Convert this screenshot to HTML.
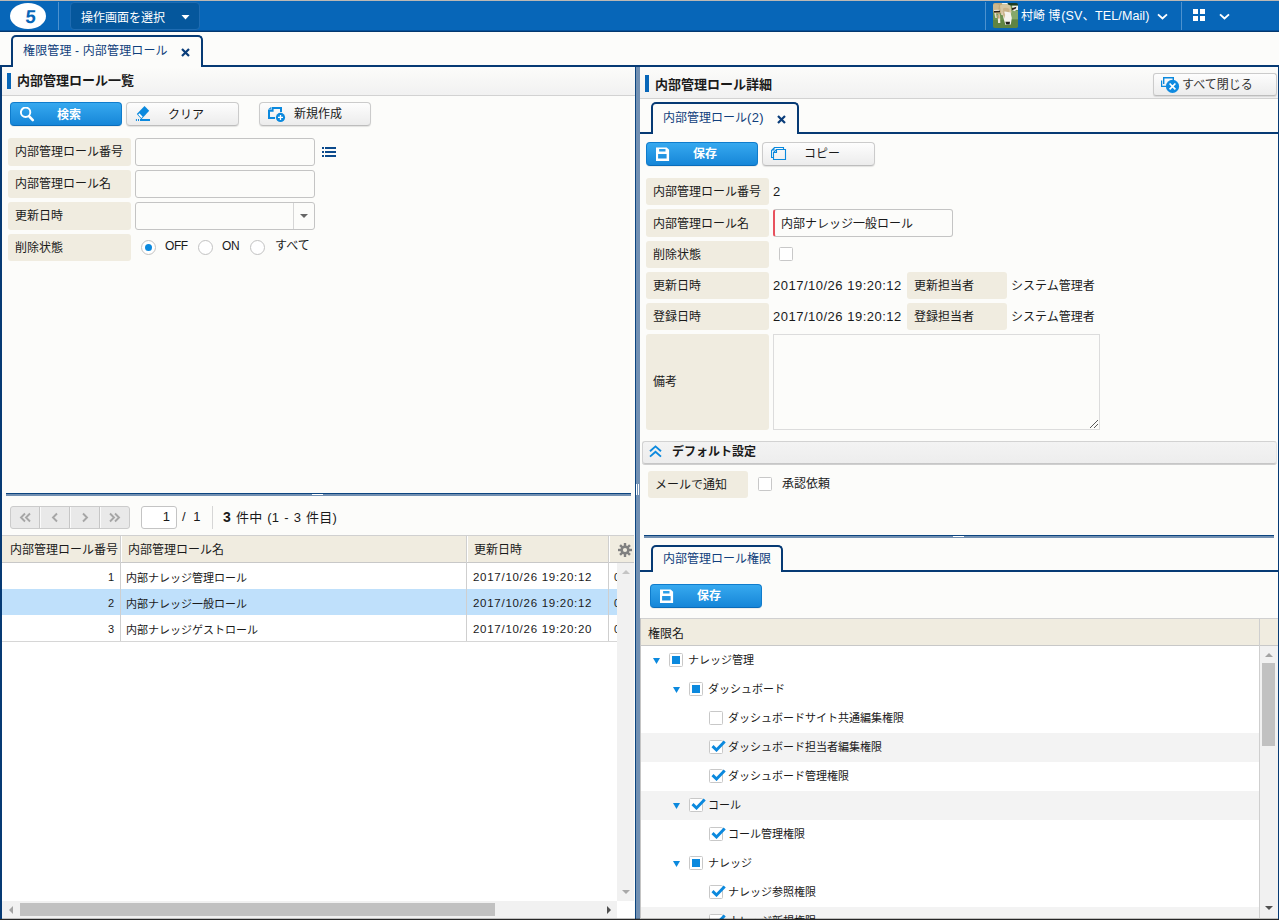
<!DOCTYPE html>
<html lang="ja">
<head>
<meta charset="utf-8">
<title>権限管理 - 内部管理ロール</title>
<style>
*{box-sizing:border-box;margin:0;padding:0}
html,body{width:1279px;height:920px;overflow:hidden;background:#fcfcfa}
body{position:relative;font-family:"Liberation Sans","Noto Sans CJK JP",sans-serif;font-size:12px;color:#1a1a1a;line-height:1}
.a{position:absolute}
.t{position:absolute;white-space:nowrap;line-height:16px;height:16px}
.nv{background:#063a74}
/* header */
#hd{left:0;top:0;width:1279px;height:32px;background:#0766b8;border-top:1px solid #bcb8b4;border-bottom:1px solid #03386f;box-shadow:inset 0 -1px 0 #05509a}
.hsep{top:1px;width:1px;height:28px;background:#4d92cf}
/* tabs */
.tab{border:2px solid #063a74;border-bottom:0;border-radius:5px 5px 0 0;background:#fcfcfa}
.tabt{color:#103f7c}
/* section title */
.sec{background:linear-gradient(#fcfcfa,#f1f1f1);border-bottom:1px solid #d2d2d2}
.mk{width:4px;background:#0766b8}
.st{font-weight:bold;font-size:13px;color:#1a1a1a}
/* buttons */
.bb{height:24px;border-radius:4px;border:1px solid #0f7ccc;border-bottom-color:#0a6cba;background:linear-gradient(#37a9ef,#1686d8);box-shadow:0 1px 0 rgba(0,0,0,.06)}
.bb .t{color:#fff;font-weight:bold}
.gb{height:24px;border-radius:4px;border:1px solid #cbcbcb;border-bottom-color:#bdbdbd;background:linear-gradient(#fdfdfd,#ececec);box-shadow:0 1px 1px rgba(0,0,0,.10)}
/* form */
.lb{background:#f0ece0;border-radius:3px}
.in{border:1px solid #c4c4c4;border-radius:3px;background:#fcfcfa}
.cb{width:14px;height:14px;border:1px solid #c8c8c8;border-radius:1.500px;background:#fff}
.rd{width:15px;height:15px;border:1px solid #c2c2c2;border-radius:50%;background:#fff}
/* grid */
.gh{background:#f0ece0;border-top:1px solid #d0d0d0;border-bottom:1px solid #c8c8c8}
.vd{width:1px;background:#cfcfcf}
.sb{background:#f1f1f1}
.th{background:#c1c1c1}
.g11{font-size:11px}
.dt{font-size:13px;letter-spacing:.5px}
.dt11{font-size:11.5px;letter-spacing:.72px}
</style>
</head>
<body>

<!-- ===== HEADER ===== -->
<div id="hd" class="a">
  <div class="a" style="left:10px;top:2px;width:36px;height:26px;border-radius:50%;background:#fff"></div>
  <div class="t" style="left:12.5px;top:6px;width:36px;text-align:center;font-size:18.500px;line-height:20px;height:20px;font-weight:bold;transform:translate(-.3px,-.5px) skewX(-5deg);color:#0766b8">5</div>
  <div class="a hsep" style="left:58px"></div>
  <div class="a" style="left:70px;top:1px;width:130px;height:28px;border-radius:4px;background:#05579c;border:1px solid #1f6cb2"></div>
  <div class="t" style="left:81px;top:9px;color:#fff">操作画面を選択</div>
  <svg class="a" style="left:181px;top:14px" width="9" height="5" viewBox="0 0 9 5"><path d="M0.5 0h8L4.5 4.6z" fill="#fff"/></svg>

  <div class="a hsep" style="left:985px"></div>
  <svg class="a" style="left:993px;top:2px" width="25" height="25" viewBox="0 0 25 25">
    <defs><clipPath id="av"><rect width="25" height="25" rx="1.800"/></clipPath><filter id="bl" x="-10%" y="-10%" width="120%" height="120%"><feGaussianBlur stdDeviation="0.550"/></filter></defs>
    <g clip-path="url(#av)"><g filter="url(#bl)">
      <rect x="-2" y="-2" width="29" height="29" fill="#6d9150"/>
      <rect x="-2" y="17" width="29" height="10" fill="#5e8443"/>
      <path d="M17 8h9v8h-9z" fill="#86a86a"/>
      <rect x="8" y="-2" width="8" height="3.500" fill="#f4f3ee"/>
      <path d="M14 -1h12v3.600H15.500z" fill="#1f3a26"/>
      <path d="M19 2.800h7v4.200h-6z" fill="#eef0ea"/>
      <path d="M-1 -1H9L9.500 9L6 11L2 10.500L-1 8z" fill="#c2a878"/>
      <path d="M0 1.500Q3 0.500 6 2L5 8H0z" fill="#cdb78c"/>
      <path d="M7 2.500Q12 -0.500 17.500 2.500L18.500 9L17.500 12H8z" fill="#d6c6a2"/>
      <path d="M10 5.500Q13 4 16.500 6L16 10.500H10.500z" fill="#c9b288"/>
      <path d="M9 9.500L12 8.500L17.500 9.500L18.800 15L17.800 21.500L12.500 22L11 17z" fill="#f5f3ee"/>
      <path d="M10.500 6.500L12.200 12L11.200 15.500L9.300 10z" fill="#cbb58d"/>
      <path d="M12.400 18.800h4.600l-0.400 2.600h-3.400z" fill="#22211f"/>
      <path d="M18.800 5.200L23.500 3.800L22.500 6L19.300 7.200z" fill="#2a1d15"/>
      <path d="M19 7.300L23.600 6L22 8.300z" fill="#f2efe8"/>
      <path d="M0.800 7.800L7 7.500V9.300L1 9.600z" fill="#2b221b"/>
      <path d="M1 7L6.500 6.800V7.700L1 8z" fill="#eeebe3"/>
      <path d="M4.800 11.500h2.200l0.300 8.500h-2.300z" fill="#efe9dc"/>
      <path d="M1.300 10h1.800l0.800 5h-1.600z" fill="#e6dcc6"/>
      <path d="M4.600 12h2l0.200 3.500h-2z" fill="#c9a77a"/>
    </g></g>
  </svg>
  <div class="t" style="left:1021px;top:7px;color:#fff;font-size:12px">村崎 博<span id="nm" style="font-size:12.5px;letter-spacing:.1px;margin-left:1px">(SV、TEL/Mail)</span></div>
  <svg class="a" style="left:1157px;top:11px" width="11" height="8" viewBox="0 0 11 8"><path d="M1 2.400L5.500 6.400L10 2.400" fill="none" stroke="#fff" stroke-width="1.900"/></svg>
  <div class="a hsep" style="left:1181px"></div>
  <svg class="a" style="left:1193px;top:8px" width="12" height="12" viewBox="0 0 12 12"><path d="M0 0h5v5H0zM7 0h5v5H7zM0 7h5v5H0zM7 7h5v5H7z" fill="#fff"/></svg>
  <svg class="a" style="left:1219px;top:11px" width="11" height="8" viewBox="0 0 11 8"><path d="M1 2.400L5.500 6.400L10 2.400" fill="none" stroke="#fff" stroke-width="1.900"/></svg>
</div>

<!-- ===== MAIN TAB STRIP ===== -->
<div class="a nv" style="left:0;top:65px;width:1279px;height:2px"></div>
<div class="a tab" style="left:11px;top:35px;width:192px;height:32px"></div>
<div class="t tabt" style="left:23px;top:43px;letter-spacing:.15px">権限管理 - 内部管理ロール</div>
<svg class="a" style="left:181px;top:48px" width="9" height="9" viewBox="0 0 9 9"><path d="M1 1L8 8M8 1L1 8" stroke="#0a3d7a" stroke-width="2.2"/></svg>

<!-- ===== LEFT PANEL ===== -->
<div class="a nv" style="left:0;top:65px;width:2px;height:855px"></div>
<div class="a sec" style="left:2px;top:67px;width:633px;height:29px"></div>
<div class="a mk" style="left:7px;top:73px;height:16px"></div>
<div class="t st" style="left:17px;top:73px">内部管理ロール一覧</div>

<!-- buttons -->
<div class="a bb" style="left:10px;top:102px;width:112px">
  <svg class="a" style="left:9px;top:4px" width="16" height="16" viewBox="0 0 16 16"><circle cx="5.600" cy="5.300" r="4.700" fill="none" stroke="#fff" stroke-width="1.900"/><path d="M9.200 9.300L12.800 13.100" stroke="#fff" stroke-width="2.600" stroke-linecap="round"/></svg>
  <div class="t" style="left:46px;top:4px">検索</div>
</div>
<div class="a gb" style="left:126px;top:102px;width:113px">
  <svg class="a" style="left:8px;top:3px" width="16" height="16" viewBox="0 0 16 16"><path d="M9.500 0L14.200 4.750L6.400 13.200L1.800 8.100z" fill="#0b89de"/><path d="M4.400 7.300L7.700 10.700L6.300 12L3.200 8.600z" fill="#fff"/><path d="M5 13h10v2H5z" fill="#0b89de"/><path d="M0.900 13h1v2h-1zM3 13h1v2h-1z" fill="#0b89de"/></svg>
  <div class="t" style="left:41px;top:4px">クリア</div>
</div>
<div class="a gb" style="left:259px;top:102px;width:112px">
  <svg class="a" style="left:8px;top:4px" width="18" height="16" viewBox="0 0 18 16"><path d="M13 5V1H4.600V3.700H1V11H7" fill="none" stroke="#0b89de" stroke-width="2"/><path d="M0 2.600L2.900 0V2.600z" fill="#0b89de"/><circle cx="12.500" cy="10.400" r="4.600" fill="#0b89de"/><path d="M10 10.400h5M12.500 7.900v5" stroke="#fff" stroke-width="1.300"/></svg>
  <div class="t" style="left:34px;top:3px">新規作成</div>
</div>

<!-- search form -->
<div class="a lb" style="left:8px;top:138px;width:123px;height:28px"></div>
<div class="t" style="left:15px;top:144px">内部管理ロール番号</div>
<div class="a in" style="left:135px;top:138px;width:180px;height:28px"></div>
<svg class="a" style="left:322px;top:147px" width="14" height="10" viewBox="0 0 14 10"><path d="M0 0h2v2H0zM3 0h11v2H3zM0 4h2v2H0zM3 4h11v2H3zM0 8h2v2H0zM3 8h11v2H3z" fill="#0b4a8c"/></svg>

<div class="a lb" style="left:8px;top:170px;width:123px;height:28px"></div>
<div class="t" style="left:15px;top:176px">内部管理ロール名</div>
<div class="a in" style="left:135px;top:170px;width:180px;height:28px"></div>

<div class="a lb" style="left:8px;top:202px;width:123px;height:28px"></div>
<div class="t" style="left:15px;top:208px">更新日時</div>
<div class="a in" style="left:135px;top:202px;width:180px;height:28px"></div>
<div class="a" style="left:293px;top:203px;width:1px;height:26px;background:#d6d6d6"></div>
<svg class="a" style="left:300px;top:214px" width="8" height="4" viewBox="0 0 8 4"><path d="M0 0h8L4 4z" fill="#666"/></svg>

<div class="a lb" style="left:8px;top:234px;width:123px;height:27px"></div>
<div class="t" style="left:15px;top:240px">削除状態</div>
<div class="a rd" style="left:141px;top:240px"></div>
<div class="a" style="left:145px;top:244px;width:7px;height:7px;border-radius:50%;background:#0b89de"></div>
<div class="t" style="left:165px;top:238px;font-size:12px;letter-spacing:-.4px">OFF</div>
<div class="a rd" style="left:198px;top:240px"></div>
<div class="t" style="left:222px;top:238px;font-size:12px;letter-spacing:-.4px">ON</div>
<div class="a rd" style="left:250px;top:240px"></div>
<div class="t" style="left:275px;top:238px">すべて</div>

<!-- left splitter -->
<div class="a" style="left:6px;top:493px;width:625px;height:1px;background:#0c4580"></div>
<div class="a" style="left:6px;top:494px;width:625px;height:2px;background:#7290b2"></div>
<div class="a" style="left:312px;top:494px;width:11px;height:1px;background:#fff"></div>

<!-- pager -->
<div class="a" style="left:10px;top:506px;width:120px;height:23px;border-radius:3px;background:#e9e9e9;border:1px solid #cbcbcb"></div>
<div class="a" style="left:39px;top:507px;width:2px;height:21px;background:#fafafa;border-left:1px solid #c6c6c6"></div>
<div class="a" style="left:69px;top:507px;width:2px;height:21px;background:#fafafa;border-left:1px solid #c6c6c6"></div>
<div class="a" style="left:99px;top:507px;width:2px;height:21px;background:#fafafa;border-left:1px solid #c6c6c6"></div>
<svg class="a" style="left:10px;top:505.500px" width="120" height="22" viewBox="0 0 120 22" fill="none" stroke="#a6a6a6" stroke-width="1.900"><path d="M15 7.5L11 11.5L15 15.500M20 7.500L16 11.500L20 15.500"/><path d="M47 7.500L43 11.500L47 15.500"/><path d="M73 7.500L77 11.500L73 15.500"/><path d="M100 7.500L104 11.500L100 15.500M105 7.500L109 11.500L105 15.500"/></svg>
<div class="a in" style="left:141px;top:506px;width:36px;height:23px;border-radius:3px;background:#fff"></div>
<div class="t" style="left:141px;top:509px;width:29px;text-align:right;font-size:13px">1</div>
<div class="t" style="left:182px;top:509px;font-size:13px;word-spacing:4px">/ 1</div>
<div class="a" style="left:212px;top:506px;width:1px;height:23px;background:#d6d6d6"></div>
<div class="t" style="left:223px;top:509px;font-size:13px;letter-spacing:.25px;word-spacing:1px"><b style="font-size:14px">3</b> 件中 (1 - 3 件目)</div>

<!-- grid -->
<div class="a" style="left:2px;top:563px;width:632px;height:356px;background:#fff"></div>
<div class="a gh" style="left:2px;top:535px;width:632px;height:28px"></div>
<div class="t" style="left:10px;top:542px">内部管理ロール番号</div>
<div class="t" style="left:128px;top:542px">内部管理ロール名</div>
<div class="t" style="left:474px;top:542px">更新日時</div>
<svg class="a" style="left:618px;top:543px" width="14" height="14" viewBox="0 0 14 14"><g fill="#808080"><circle cx="7" cy="7" r="4.6"/><g id="tt"><rect x="5.8" y="0" width="2.400" height="14"/></g><use href="#tt" transform="rotate(45 7 7)"/><use href="#tt" transform="rotate(90 7 7)"/><use href="#tt" transform="rotate(135 7 7)"/></g><circle cx="7" cy="7" r="2.1" fill="#f0ece0"/></svg>
<div class="a" style="left:2px;top:589px;width:615px;height:26px;background:#bfe0fb"></div>
<div class="a vd" style="left:120px;top:536px;height:105px"></div>
<div class="a vd" style="left:466px;top:536px;height:105px"></div>
<div class="a vd" style="left:608px;top:536px;height:105px"></div>
<div class="a" style="left:2px;top:641px;width:615px;height:1px;background:#d6d6d6"></div>
<div class="a" style="left:121px;top:536px;width:1px;height:26px;background:#fff"></div><div class="a" style="left:467px;top:536px;width:1px;height:26px;background:#fff"></div><div class="a" style="left:609px;top:536px;width:1px;height:26px;background:#fff"></div>

<div class="t g11" style="left:2px;top:569px;width:112px;text-align:right">1</div>
<div class="t g11" style="left:126px;top:570px">内部ナレッジ管理ロール</div>
<div class="t dt11" style="left:473px;top:569px">2017/10/26 19:20:12</div>
<div class="t g11" style="left:2px;top:595px;width:112px;text-align:right">2</div>
<div class="t g11" style="left:126px;top:596px">内部ナレッジ一般ロール</div>
<div class="t dt11" style="left:473px;top:595px">2017/10/26 19:20:12</div>
<div class="t g11" style="left:2px;top:621px;width:112px;text-align:right">3</div>
<div class="t g11" style="left:126px;top:622px">内部ナレッジゲストロール</div>
<div class="t dt11" style="left:473px;top:621px">2017/10/26 19:20:20</div>
<div class="t g11" style="left:614px;top:569px">0</div>
<div class="t g11" style="left:614px;top:595px">0</div>
<div class="t g11" style="left:614px;top:621px">0</div>

<!-- grid scrollbars -->
<div class="a sb" style="left:617px;top:563px;width:17px;height:338px"></div>
<svg class="a" style="left:622px;top:570px" width="8" height="4" viewBox="0 0 8 4"><path d="M0 4h8L4 0z" fill="#c4c4c4"/></svg>
<svg class="a" style="left:622px;top:890px" width="8" height="4" viewBox="0 0 8 4"><path d="M0 0h8L4 4z" fill="#a8a8a8"/></svg>
<div class="a sb" style="left:2px;top:901px;width:615px;height:17px"></div>
<div class="a th" style="left:20px;top:903px;width:475px;height:13px"></div>
<svg class="a" style="left:9px;top:906px" width="4" height="8" viewBox="0 0 4 8"><path d="M4 0v8L0 4z" fill="#a3a3a3"/></svg>
<svg class="a" style="left:607px;top:906px" width="4" height="8" viewBox="0 0 4 8"><path d="M0 0v8L4 4z" fill="#505050"/></svg>

<!-- ===== VERTICAL SPLITTER ===== -->
<div class="a" style="left:635px;top:67px;width:1px;height:853px;background:#0c4580"></div>
<div class="a" style="left:636px;top:67px;width:4px;height:853px;background:#7290b2"></div>
<div class="a" style="left:636px;top:484px;width:1px;height:11px;background:#fff"></div>
<div class="a" style="left:638px;top:484px;width:1px;height:11px;background:#fff"></div>

<!-- ===== RIGHT PANEL ===== -->
<div class="a sec" style="left:640px;top:67px;width:639px;height:32px"></div>
<div class="a mk" style="left:645px;top:75px;height:17px"></div>
<div class="t st" style="left:655px;top:77px">内部管理ロール詳細</div>
<div class="a gb" style="left:1153px;top:73px;width:124px;height:23px;border-radius:3px">
  <svg class="a" style="left:6px;top:2px" width="20" height="18" viewBox="0 0 20 18"><path d="M3.700 8V1.700H13.300V5" fill="none" stroke="#0b89de" stroke-width="1.400"/><path d="M1.600 4.500V10.400H6" fill="none" stroke="#0b89de" stroke-width="1.200"/><circle cx="12.500" cy="10.400" r="6.600" fill="#0f8ae0"/><path d="M9.600 7.500l5.800 5.800M15.400 7.500l-5.800 5.800" stroke="#fff" stroke-width="1.700"/></svg>
  <div class="t" style="left:28px;top:3px;color:#333">すべて閉じる</div>
</div>

<!-- inner tab -->
<div class="a nv" style="left:640px;top:132px;width:639px;height:2px"></div>
<div class="a tab" style="left:651px;top:102px;width:148px;height:32px"></div>
<div class="t tabt" style="left:663px;top:110px">内部管理ロール<span style="font-size:13px;letter-spacing:.4px">(2)</span></div>
<svg class="a" style="left:777px;top:115px" width="9" height="9" viewBox="0 0 9 9"><path d="M1 1L8 8M8 1L1 8" stroke="#0a3d7a" stroke-width="2.2"/></svg>

<!-- buttons -->
<div class="a bb" style="left:646px;top:142px;width:112px">
  <svg class="a" style="left:9px;top:4px" width="14" height="15" viewBox="0 0 14 15"><path fill-rule="evenodd" d="M0 0.400H10.700L13.100 2.800V14.100H0zM3.100 2.100V4.400H9.500V2.100zM2.100 7.100V11.400H10.600V7.100z" fill="#fff"/></svg>
  <div class="t" style="left:46px;top:3px">保存</div>
</div>
<div class="a gb" style="left:762px;top:142px;width:113px">
  <svg class="a" style="left:8px;top:4px" width="16" height="14" viewBox="0 0 16 14"><path d="M12.500 2.500V0.500H3.500L0.500 3.500V10.500H2.500" fill="none" stroke="#0b89de" stroke-width="1.100"/><path d="M1 3.500H3.500V1z" fill="#0b89de"/><path d="M5.500 2.500H14.500V12.500H2.500V5.500z" fill="none" stroke="#0b89de" stroke-width="1.100"/><path d="M2.500 5.500H5.500V2.500" fill="none" stroke="#0b89de" stroke-width="1.100"/></svg>
  <div class="t" style="left:41px;top:3px">コピー</div>
</div>

<!-- detail form -->
<div class="a lb" style="left:646px;top:178px;width:123px;height:27px"></div>
<div class="t" style="left:653px;top:184px">内部管理ロール番号</div>
<div class="t" style="left:773px;top:184px;font-size:13px">2</div>

<div class="a lb" style="left:646px;top:209px;width:123px;height:28px"></div>
<div class="t" style="left:653px;top:216px">内部管理ロール名</div>
<div class="a in" style="left:773px;top:209px;width:180px;height:28px;border-left:2px solid #e8525e"></div>
<div class="t" style="left:781px;top:216px">内部ナレッジ一般ロール</div>

<div class="a lb" style="left:646px;top:241px;width:123px;height:27px"></div>
<div class="t" style="left:653px;top:247px">削除状態</div>
<div class="a cb" style="left:779px;top:247px"></div>

<div class="a lb" style="left:646px;top:272px;width:123px;height:27px"></div>
<div class="t" style="left:653px;top:278px">更新日時</div>
<div class="t dt" style="left:773px;top:278px">2017/10/26 19:20:12</div>
<div class="a lb" style="left:907px;top:272px;width:100px;height:27px"></div>
<div class="t" style="left:914px;top:278px">更新担当者</div>
<div class="t" style="left:1011px;top:278px">システム管理者</div>

<div class="a lb" style="left:646px;top:303px;width:123px;height:27px"></div>
<div class="t" style="left:653px;top:309px">登録日時</div>
<div class="t dt" style="left:773px;top:309px">2017/10/26 19:20:12</div>
<div class="a lb" style="left:907px;top:303px;width:100px;height:27px"></div>
<div class="t" style="left:914px;top:309px">登録担当者</div>
<div class="t" style="left:1011px;top:309px">システム管理者</div>

<div class="a lb" style="left:646px;top:334px;width:123px;height:96px"></div>
<div class="t" style="left:653px;top:374px">備考</div>
<div class="a" style="left:773px;top:334px;width:327px;height:96px;border:1px solid #dcdcdc;background:#fcfcfa"></div>
<svg class="a" style="left:1090px;top:419px" width="9" height="9" viewBox="0 0 9 9"><path d="M0 8h1v1h-1zM1 7h1v1h-1zM2 6h1v1h-1zM3 5h1v1h-1zM4 4h1v1h-1zM5 3h1v1h-1zM6 2h1v1h-1zM7 1h1v1h-1zM4 8h1v1h-1zM5 7h1v1h-1zM6 6h1v1h-1zM7 5h1v1h-1z" fill="#5a5a5a"/></svg>

<!-- default settings -->
<div class="a" style="left:642px;top:441px;width:635px;height:23px;border:1px solid #d2d2d2;border-bottom-color:#c6c6c6;border-right-color:#e4e4e4;border-radius:3px;background:linear-gradient(#f3f3f3,#ededed);box-shadow:0 1px 0 #cfcfcf"></div>
<svg class="a" style="left:649px;top:445px" width="13" height="13" viewBox="0 0 13 13"><path d="M1 6.200L6.500 1.400L12 6.200M1 11.600L6.500 6.800L12 11.600" fill="none" stroke="#0b89de" stroke-width="1.900"/></svg>
<div class="t" style="left:672px;top:444px;font-weight:bold">デフォルト設定</div>

<div class="a lb" style="left:648px;top:471px;width:100px;height:27px"></div>
<div class="t" style="left:655px;top:477px">メールで通知</div>
<div class="a cb" style="left:758px;top:477px"></div>
<div class="t" style="left:782px;top:476px">承認依頼</div>

<!-- right h-splitter -->
<div class="a" style="left:644px;top:535px;width:630px;height:1px;background:#0c4580"></div>
<div class="a" style="left:644px;top:536px;width:630px;height:2px;background:#7290b2"></div>
<div class="a" style="left:953px;top:536px;width:11px;height:1px;background:#fff"></div>

<!-- bottom tab -->
<div class="a nv" style="left:640px;top:570px;width:639px;height:2px"></div>
<div class="a tab" style="left:651px;top:545px;width:132px;height:27px"></div>
<div class="t tabt" style="left:663px;top:551px">内部管理ロール権限</div>

<div class="a bb" style="left:650px;top:584px;width:112px">
  <svg class="a" style="left:9px;top:4px" width="14" height="15" viewBox="0 0 14 15"><path fill-rule="evenodd" d="M0 0.400H10.700L13.100 2.800V14.100H0zM3.100 2.100V4.400H9.500V2.100zM2.100 7.100V11.400H10.600V7.100z" fill="#fff"/></svg>
  <div class="t" style="left:46px;top:3px">保存</div>
</div>

<!-- tree grid -->
<div class="a" style="left:640px;top:646px;width:620px;height:272px;background:#fff"></div>
<div class="a" style="left:640px;top:733px;width:620px;height:29px;background:#f3f3f3"></div>
<div class="a" style="left:640px;top:791px;width:620px;height:29px;background:#f3f3f3"></div>
<div class="a" style="left:640px;top:907px;width:620px;height:11px;background:#f3f3f3"></div>
<div class="a gh" style="left:640px;top:618px;width:639px;height:28px"></div>
<div class="a" style="left:640px;top:618px;width:1px;height:300px;background:#c4c4c4"></div>
<div class="a vd" style="left:1259px;top:619px;height:299px"></div>
<div class="t" style="left:648px;top:626px">権限名</div>
<div class="a sb" style="left:1260px;top:646px;width:18px;height:272px"></div>
<div class="a th" style="left:1262px;top:663px;width:13px;height:83px"></div>
<svg class="a" style="left:1265px;top:653px" width="8" height="4" viewBox="0 0 8 4"><path d="M0 4h8L4 0z" fill="#a3a3a3"/></svg>
<svg class="a" style="left:1265px;top:906px" width="8" height="4" viewBox="0 0 8 4"><path d="M0 0h8L4 4z" fill="#505050"/></svg>
<div class="a nv" style="left:1278px;top:67px;width:1px;height:853px"></div>
<svg class="a" style="left:653px;top:658px" width="7" height="6" viewBox="0 0 7 6"><path d="M0 0h7L3.500 6z" fill="#0b89de"/></svg>
<div class="a cb" style="left:669px;top:653px"></div>
<div class="a" style="left:672px;top:656px;width:8px;height:8px;background:#0b89de"></div>
<div class="t g11" style="left:688px;top:652px">ナレッジ管理</div>
<svg class="a" style="left:673px;top:687px" width="7" height="6" viewBox="0 0 7 6"><path d="M0 0h7L3.500 6z" fill="#0b89de"/></svg>
<div class="a cb" style="left:689px;top:682px"></div>
<div class="a" style="left:692px;top:685px;width:8px;height:8px;background:#0b89de"></div>
<div class="t g11" style="left:708px;top:681px">ダッシュボード</div>
<div class="a cb" style="left:709px;top:711px"></div>
<div class="t g11" style="left:728px;top:710px">ダッシュボードサイト共通編集権限</div>
<div class="a cb" style="left:709px;top:740px"></div>
<svg class="a" style="left:711px;top:738px" width="16" height="14" viewBox="0 0 16 14"><path d="M1.500 8.100L5.500 12L13.700 3.500" fill="none" stroke="#0b89de" stroke-width="2.900"/></svg>
<div class="t g11" style="left:728px;top:739px">ダッシュボード担当者編集権限</div>
<div class="a cb" style="left:709px;top:769px"></div>
<svg class="a" style="left:711px;top:767px" width="16" height="14" viewBox="0 0 16 14"><path d="M1.500 8.100L5.500 12L13.700 3.500" fill="none" stroke="#0b89de" stroke-width="2.900"/></svg>
<div class="t g11" style="left:728px;top:768px">ダッシュボード管理権限</div>
<svg class="a" style="left:673px;top:803px" width="7" height="6" viewBox="0 0 7 6"><path d="M0 0h7L3.500 6z" fill="#0b89de"/></svg>
<div class="a cb" style="left:689px;top:798px"></div>
<svg class="a" style="left:691px;top:796px" width="16" height="14" viewBox="0 0 16 14"><path d="M1.500 8.100L5.500 12L13.700 3.500" fill="none" stroke="#0b89de" stroke-width="2.900"/></svg>
<div class="t g11" style="left:708px;top:797px">コール</div>
<div class="a cb" style="left:709px;top:827px"></div>
<svg class="a" style="left:711px;top:825px" width="16" height="14" viewBox="0 0 16 14"><path d="M1.500 8.100L5.500 12L13.700 3.500" fill="none" stroke="#0b89de" stroke-width="2.900"/></svg>
<div class="t g11" style="left:728px;top:826px">コール管理権限</div>
<svg class="a" style="left:673px;top:861px" width="7" height="6" viewBox="0 0 7 6"><path d="M0 0h7L3.500 6z" fill="#0b89de"/></svg>
<div class="a cb" style="left:689px;top:856px"></div>
<div class="a" style="left:692px;top:859px;width:8px;height:8px;background:#0b89de"></div>
<div class="t g11" style="left:708px;top:855px">ナレッジ</div>
<div class="a cb" style="left:709px;top:885px"></div>
<svg class="a" style="left:711px;top:883px" width="16" height="14" viewBox="0 0 16 14"><path d="M1.500 8.100L5.500 12L13.700 3.500" fill="none" stroke="#0b89de" stroke-width="2.900"/></svg>
<div class="t g11" style="left:728px;top:884px">ナレッジ参照権限</div>
<div class="a cb" style="left:709px;top:914px"></div>
<svg class="a" style="left:711px;top:912px" width="16" height="14" viewBox="0 0 16 14"><path d="M1.500 8.100L5.500 12L13.700 3.500" fill="none" stroke="#0b89de" stroke-width="2.900"/></svg>
<div class="t g11" style="left:728px;top:913px">ナレッジ新規権限</div>



<!-- bottom frame line -->
<div class="a" style="left:0;top:919px;width:1279px;height:1px;background:#262626"></div><div class="a" style="left:2px;top:918px;width:1276px;height:1px;background:rgba(0,0,0,.25)"></div>
</body>
</html>
